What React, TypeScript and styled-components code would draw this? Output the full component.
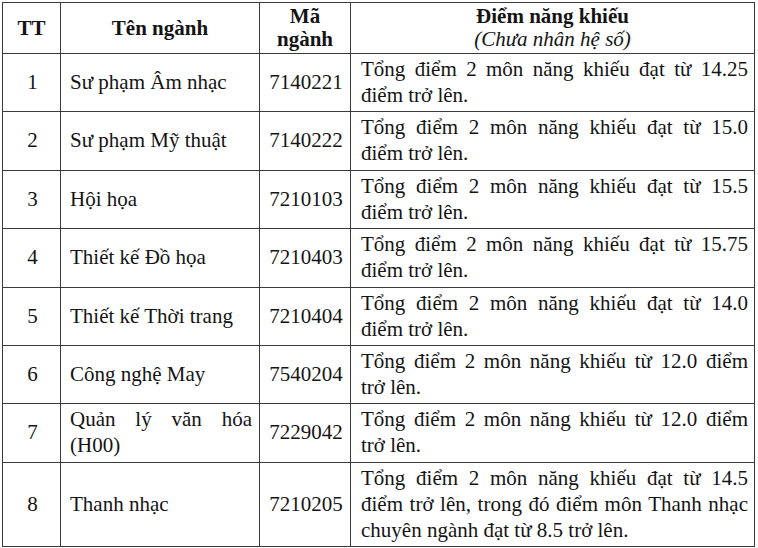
import React from "react";
import styled, { createGlobalStyle } from "styled-components";

const GlobalStyle = createGlobalStyle`
  html, body {
    margin: 0;
    padding: 0;
    background: #ffffff;
  }
`;

const Page = styled.div`
  padding: 2px 0 0 2px;
  font-family: "Liberation Serif", "Times New Roman", serif;
  color: #141414;
`;

const Table = styled.table`
  border-collapse: collapse;
  table-layout: fixed;
  width: 752px;
  font-size: 21px;
`;

const HeadCell = styled.th`
  border: 1px solid #3a3a3a;
  padding: 2px 4px;
  line-height: 23px;
  font-weight: 700;
  text-align: center;
  vertical-align: middle;
`;

const Note = styled.span`
  display: block;
  font-weight: 400;
  font-style: italic;
`;

const Cell = styled.td<{ $align?: "center" | "justify" }>`
  border: 1px solid #3a3a3a;
  padding: 2px 7px 3.4px 9px;
  line-height: 26px;
  text-align: ${(p) => p.$align ?? "justify"};
  vertical-align: middle;
`;

const DescCell = styled(Cell)`
  padding: 2px 6px 3.4px 10px;
`;

type Row = {
  no: number;
  name: string;
  code: string;
  desc: string;
};

const rows: Row[] = [
  { no: 1, name: "Sư phạm Âm nhạc", code: "7140221", desc: "Tổng điểm 2 môn năng khiếu đạt từ 14.25 điểm trở lên." },
  { no: 2, name: "Sư phạm Mỹ thuật", code: "7140222", desc: "Tổng điểm 2 môn năng khiếu đạt từ 15.0 điểm trở lên." },
  { no: 3, name: "Hội họa", code: "7210103", desc: "Tổng điểm 2 môn năng khiếu đạt từ 15.5 điểm trở lên." },
  { no: 4, name: "Thiết kế Đồ họa", code: "7210403", desc: "Tổng điểm 2 môn năng khiếu đạt từ 15.75 điểm trở lên." },
  { no: 5, name: "Thiết kế Thời trang", code: "7210404", desc: "Tổng điểm 2 môn năng khiếu đạt từ 14.0 điểm trở lên." },
  { no: 6, name: "Công nghệ May", code: "7540204", desc: "Tổng điểm 2 môn năng khiếu từ 12.0 điểm trở lên." },
  { no: 7, name: "Quản lý văn hóa (H00)", code: "7229042", desc: "Tổng điểm 2 môn năng khiếu từ 12.0 điểm trở lên." },
  {
    no: 8,
    name: "Thanh nhạc",
    code: "7210205",
    desc: "Tổng điểm 2 môn năng khiếu đạt từ 14.5 điểm trở lên, trong đó điểm môn Thanh nhạc chuyên ngành đạt từ 8.5 trở lên.",
  },
];

const App = () => {
  return (
    <Page>
      <GlobalStyle />
      <Table>
        <colgroup>
          <col style={{ width: 58 }} />
          <col style={{ width: 199 }} />
          <col style={{ width: 91 }} />
          <col style={{ width: 404 }} />
        </colgroup>
        <thead>
          <tr>
            <HeadCell>TT</HeadCell>
            <HeadCell>Tên ngành</HeadCell>
            <HeadCell>
              Mã
              <br />
              ngành
            </HeadCell>
            <HeadCell>
              Điểm năng khiếu
              <Note>(Chưa nhân hệ số)</Note>
            </HeadCell>
          </tr>
        </thead>
        <tbody>
          {rows.map((r) => (
            <tr key={r.no}>
              <Cell $align="center">{r.no}</Cell>
              <Cell>{r.name}</Cell>
              <Cell $align="center">{r.code}</Cell>
              <DescCell>{r.desc}</DescCell>
            </tr>
          ))}
        </tbody>
      </Table>
    </Page>
  );
};

export default App;
